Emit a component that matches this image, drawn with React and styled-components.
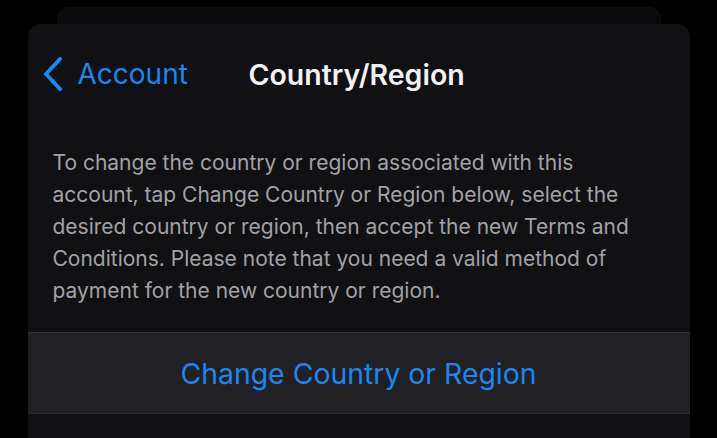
import React from 'react'
import styled, { createGlobalStyle } from 'styled-components'

const GlobalStyle = createGlobalStyle`
  html, body {
    margin: 0;
    padding: 0;
    background: #000;
    height: 100%;
    overflow: hidden;
  }
  #root {
    height: 100%;
  }
`

const Screen = styled.div`
  width: 717px;
  height: 438px;
  background: #000;
  display: flex;
  flex-direction: column;
  align-items: center;
  padding-top: 7px;
  box-sizing: border-box;
  font-family: Inter, "Liberation Sans", sans-serif;
`

const BackSheet = styled.div`
  width: 604px;
  height: 17px;
  flex-shrink: 0;
  background: #0b0b0d;
  border-radius: 12px 12px 0 0;
`

const Sheet = styled.div`
  width: 662px;
  flex: 1;
  background: #111114;
  border-radius: 13px 13px 0 0;
  display: flex;
  flex-direction: column;
`

const NavBar = styled.div`
  display: flex;
  align-items: center;
  height: 100px;
  padding-left: 14px;
`

const BackButton = styled.div`
  display: flex;
  align-items: center;
  gap: 14px;
  color: #1b86f0;
  font-size: 28px;
  width: 207px;
`

const Title = styled.div`
  color: #f2f2f5;
  font-size: 28.5px;
  font-weight: 600;
`

const Note = styled.p`
  margin: 23px 0 0;
  padding: 0 25px;
  color: #a1a1a6;
  font-size: 21px;
  line-height: 32px;
`

const ActionRow = styled.div`
  margin-top: 25px;
  height: 80px;
  display: flex;
  align-items: center;
  justify-content: center;
  background: #212125;
  border-top: 1px solid #2e2e33;
  border-bottom: 1px solid #2e2e33;
  color: #1b86f0;
  font-size: 28.4px;
`

const Chevron = () => (
  <svg width="22" height="34" viewBox="0 0 22 34" fill="none">
    <path d="M18 2 L4 17 L18 32" stroke="#1b86f0" strokeWidth="4" strokeLinecap="round" strokeLinejoin="round" />
  </svg>
)

export default function App() {
  return (
    <>
      <GlobalStyle />
      <Screen>
        <BackSheet />
        <Sheet>
          <NavBar>
            <BackButton>
              <Chevron />
              Account
            </BackButton>
            <Title>Country/Region</Title>
          </NavBar>
          <Note>
            To change the country or region associated with this<br />
            account, tap Change Country or Region below, select the<br />
            desired country or region, then accept the new Terms and<br />
            Conditions. Please note that you need a valid method of<br />
            payment for the new country or region.
          </Note>
          <ActionRow>Change Country or Region</ActionRow>
        </Sheet>
      </Screen>
    </>
  )
}
